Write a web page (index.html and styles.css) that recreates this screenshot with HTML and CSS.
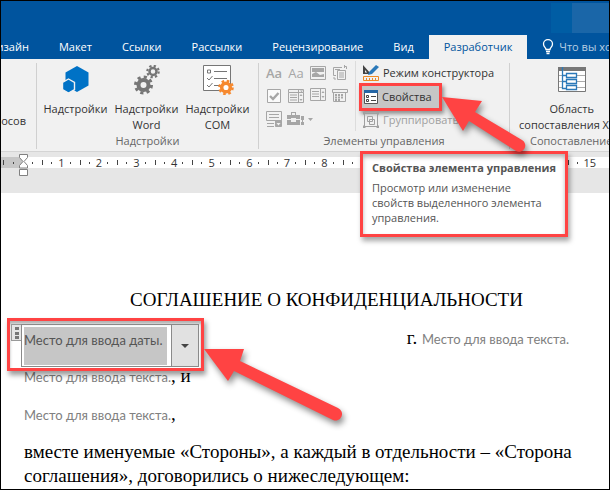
FILE: index.html
```
<!DOCTYPE html>
<html lang="ru">
  <head>
    <meta charset="utf-8">
    <title>Соглашение о конфиденциальности</title>
    <link rel="stylesheet" href="styles.css">
  </head>
  <body>
  <div class="window">
    <header class="titlebar">
      <div class="account"><span></span></div>
      <nav class="tabs">
        <button class="tab first">Дизайн</button>
        <button class="tab">Макет</button>
        <button class="tab">Ссылки</button>
        <button class="tab">Рассылки</button>
        <button class="tab">Рецензирование</button>
        <button class="tab">Вид</button>
        <button class="tab active">Разработчик</button>
        <button class="tab tell">
          <svg width="12" height="16" viewBox="0 0 12 16" fill="none" stroke="#fff" stroke-width="1.3"><path d="M4 10.500C4 8.500 1.500 8 1.500 5a4.500 4.300 0 0 1 9 0C10.500 8 8 8.500 8 10.500zM4 12.500h4M4.500 14.500h3"/></svg>
          Что вы хотите
        </button>
      </nav>
    </header>

    <section class="ribbon">
      <div class="group macros">
        <button class="big">запросов</button>
      </div>
      <div class="group addins">
        <div class="tools">
          <button class="big">
            <svg width="28" height="30" viewBox="0 0 28 30"><path fill="#0072c6" d="M15 1l11.500 6.500v13L15 27 3.500 20.500v-13z"/><path fill="#0072c6" stroke="#f1f1f1" stroke-width="1.400" d="M6.500 14l6 3.500v7l-6 3.500-6-3.500v-7z"/></svg>
            Надстройки
          </button>
          <button class="big">
            <svg width="28" height="30" viewBox="0 0 28 30" fill="none" stroke="#767676">
              <circle cx="10.500" cy="20" r="5" stroke-width="4"/><circle cx="10.500" cy="20" r="8" stroke-width="3" stroke-dasharray="3.140 3.140"/>
              <circle cx="20" cy="6.500" r="3.500" stroke-width="2.500"/><circle cx="20" cy="6.500" r="5.700" stroke-width="2.200" stroke-dasharray="2.240 2.240"/>
            </svg>
            Надстройки<br>Word
          </button>
          <button class="big">
            <svg width="32" height="30" viewBox="0 0 32 30" fill="none" stroke="#767676">
              <path fill="#fff" d="M1.500.5h27v25h-27z"/><path d="M5.500 5h3v3h-3zM12 6.500h13M12 13.500h13M12 20.500h5M5 13l2 2 3.500-4M5 20l2 2 3.500-4"/>
              <g stroke="#f6892f"><circle cx="24" cy="22.500" r="4.300" stroke-width="3.500" fill="#fff"/><circle cx="24" cy="22.500" r="6.500" stroke-width="2.600" stroke-dasharray="2.550 2.550"/></g>
            </svg>
            Надстройки<br>COM
          </button>
        </div>
        <div class="caption">Надстройки</div>
      </div>
      <div class="group controls">
        <div class="tools">
          <div class="gallery">
            <button class="aa bold" aria-label="Форматированный текст">Aa</button>
            <button class="aa" aria-label="Обычный текст">Aa</button>
            <button aria-label="Рисунок"><svg width="16" height="16" viewBox="0 0 16 16"><path fill="none" stroke="#a6a6a6" d="M.5 1.500h15v13H.5z"/><path fill="#a6a6a6" d="M2 3h12v4H2zM2 12V9l4-2 4 3 4-1v3z"/></svg></button>
            <button aria-label="Коллекция"><svg width="16" height="16" viewBox="0 0 16 16" fill="none" stroke="#a6a6a6"><path d="M10 2.500H1.500v8H4M5.500 5.500h8v9h-8zM7 8h5M7 10h5M7 12h5M3 4.500h5M12 1.500h2.500V4M12.500 0v3M2 12v2h2"/></svg></button>
            <button aria-label="Флажок"><svg width="16" height="16" viewBox="0 0 16 16" fill="none" stroke="#a6a6a6"><path fill="#fafafa" d="M1.500 1.500h13v13h-13z"/><path stroke-width="2.400" d="M4 8l3 3 5.500-6"/></svg></button>
            <button aria-label="Поле со списком"><svg width="16" height="16" viewBox="0 0 16 16" fill="none" stroke="#a6a6a6"><path d="M.5 1.500h15v3H.5zM.5 4.500v10h15v-10M10.500 2v12M2 7h7M2 9.500h7M2 12h7"/><path fill="#a6a6a6" stroke="none" d="M11.500 8L13 6l1.500 2zM11.500 11h3L13 13zM12 2.500h3L13.500 4z"/></svg></button>
            <button aria-label="Раскрывающийся список"><svg width="16" height="16" viewBox="0 0 16 16" fill="none" stroke="#a6a6a6"><path d="M.5.5h15v12H.5zM10.500 1v11M2 3.500h7M2 6h7M2 8.500h7"/><path fill="#a6a6a6" stroke="none" d="M11.500 5l1.500-2 1.500 2zM11.500 8h3L13 10z"/></svg></button>
            <button aria-label="Выбор даты"><svg width="16" height="16" viewBox="0 0 16 16" fill="none" stroke="#a6a6a6"><path d="M.5 1.500h15v3H.5zM1.500 4.500v9h12v-9"/><path stroke-width="2" stroke-dasharray="2 1" d="M3 7h9M3 9.500h9M3 12h6"/></svg></button>
            <button aria-label="Повторяющийся раздел"><svg width="16" height="16" viewBox="0 0 16 16" fill="none" stroke="#a6a6a6"><path d="M.5.5h15v9H.5zM3 3.500h10M3 6.500h10M1 12.500h7M1 15.500h7"/><path fill="#a6a6a6" d="M9.500 9.500h6v6h-6z"/><path fill="#f1f1f1" stroke="none" d="M10.500 12h4l-2 2.500z"/></svg></button>
            <button class="legacy" aria-label="Инструменты из предыдущих версий"><svg width="26" height="16" viewBox="0 0 26 16"><path fill="#a6a6a6" fill-rule="evenodd" d="M0 4h4V1h5v3h4v4H9V7H4v1H0zM5 4h3V2H5zM0 9h4v2h5V9h4v5H0zM14 5h3v4h-1v2h1v3h-3v-3h1V9h-1zM21 7h5l-2.500 3z"/></svg></button>
          </div>
          <div class="commands">
            <button class="command">
              <svg width="16" height="16" viewBox="0 0 16 16"><path fill="#444" fill-rule="evenodd" d="M0 0l8 9H0zM2 5v2.500h2.200z"/><path fill="#2b79b9" d="M13 0l3 2-7 7-4 1 1-3z"/><path fill="none" stroke="#f08a24" d="M.5 11.500h15v4H.5zM3.500 13v2M6.500 13v2M9.500 13v2M12.500 13v2"/></svg>
              Режим конструктора
            </button>
            <button class="command pressed">
              <svg width="14" height="16" viewBox="0 0 14 16"><path fill="#fff" stroke="#555" d="M.5 1.500h13v13H.5z"/><path fill="#2566a5" d="M0 1h14v3H0z"/><path fill="none" stroke="#444" d="M2.500 6.500h2v2h-2zM2.500 10.500h2v2h-2zM7 7.500h5M7 11.500h5"/></svg>
              Свойства
            </button>
            <button class="command" disabled>
              <svg width="16" height="16" viewBox="0 0 16 16" fill="none" stroke="#a0a0a0"><path d="M1.500 1.500h13v13h-13zM4.500 4.500h5v5h-5zM6.500 7.500h5v5h-5z"/><path fill="#a0a0a0" d="M0 0h2v2H0zM14 0h2v2h-2zM0 14h2v2H0zM14 14h2v2h-2z"/></svg>
              Группировать
            </button>
          </div>
        </div>
        <div class="caption">Элементы управления</div>
      </div>
      <div class="group mapping">
        <div class="tools">
          <button class="big">
            <svg width="28" height="30" viewBox="0 0 28 30" fill="none"><path fill="#fff" stroke="#777" d="M.5 2.500h27v24H.5z"/><path fill="#777" d="M0 2h28v4H0z"/><path stroke="#aaa" d="M1 10.500h26M1 16.500h26M1 22.500h26"/><path stroke="#2b79b9" stroke-width="1.300" fill="#fff" d="M4.500 2v21.500h4M4.500 10.500h4M4.500 16.500h4M8.500 8.500h10v4h-10zM8.500 14.500h10v4h-10zM8.500 20.500h10v4h-10z"/></svg>
            Область<br>сопоставления XML
          </button>
        </div>
        <div class="caption">Сопоставление</div>
      </div>
    </section>

    <div class="ruler">
      <ol class="scale">
        <li>1</li><li>2</li><li>3</li><li>4</li><li>5</li>
        <li>6</li><li>7</li><li>8</li><li></li><li></li>
        <li></li><li></li><li></li><li></li><li>15</li>
      </ol>
      <svg class="indent" width="9" height="22" viewBox="0 0 9 22" fill="#fff" stroke="#808080"><path d="M.5.500h8v3L5 7.500l3.500 4v2.500h-8v-2.500L4 7.500.5 3.500zM.5 15.500h8v6h-8z"/></svg>
    </div>

    <main class="page">
      <h1>СОГЛАШЕНИЕ О КОНФИДЕНЦИАЛЬНОСТИ</h1>
      <div class="line city">
        <div class="date">
          <span class="grip"></span>
          <label class="field"><input type="text" value="Место для ввода даты." aria-label="Дата" readonly></label>
          <button class="drop" aria-label="Выбрать дату"></button>
        </div>
        <p>г. <span class="hint">Место для ввода текста.</span></p>
      </div>
      <p class="line"><span class="hint">Место для ввода текста.</span>, и</p>
      <p class="line"><span class="hint">Место для ввода текста.</span>,</p>
      <p class="line">вместе именуемые «Стороны», а каждый в отдельности – «Сторона соглашения», договорились о нижеследующем:</p>
    </main>

    <div class="tooltip" role="tooltip">
      <strong>Свойства элемента управления</strong>
      <p>Просмотр или изменение свойств выделенного элемента управления.</p>
    </div>

    <svg class="arrows" width="610" height="490" viewBox="0 0 610 490" fill="#ff4343">
      <path d="M442 97l40 4-7 11 47 28a6 6 0 0 1-6 11l-47-30-6 10z"/>
      <path d="M204 349l40 0-4 12 98 47a6 6 0 0 1-5 12l-99-49-6 10z"/>
    </svg>
  </div>
  </body>
</html>
```
FILE: styles.css
```
* {
  box-sizing: border-box;
}
body {
  margin: 0;
  font: 11px/16px "Open Sans", "Noto Sans", sans-serif;
  color: #333;
}
p, h1, ol {
  margin: 0;
  padding: 0;
}
button, input {
  font: inherit;
  color: inherit;
  background: none;
  border: 0;
  padding: 0;
}
svg {
  flex: none;
}
.window {
  position: relative;
  min-height: 100vh;
  border: 1px solid #000;
  background: #fff;
  overflow: hidden;
}

/* title bar and tabs */
.titlebar {
  background: #00549e;
}
.account {
  display: flex;
  justify-content: flex-end;
  height: 34px;
  padding-top: 2px;
}
.account span {
  width: 58px;
  height: 30px;
  background: linear-gradient(90deg, #005da4 21px, #1a66a8 21px);
}
.tabs {
  display: flex;
  height: 24px;
}
.tab {
  flex: none;
  padding: 0 15px;
  color: #fff;
  white-space: nowrap;
}
.tab.first {
  margin-left: -27px;
}
.tab.active {
  background: #f1f1f1;
  color: #00549e;
}
.tab.tell {
  display: flex;
  align-items: center;
  gap: 5px;
  color: #b9cfe3;
}

/* ribbon */
.ribbon {
  display: flex;
  height: 93px;
  padding-top: 4px;
  background: #f1f1f1;
  border-bottom: 1px solid #d4d4d4;
}
.group {
  display: flex;
  flex: none;
  flex-direction: column;
  justify-content: space-between;
  height: 86px;
  border-right: 1px solid #d0d0d0;
}
.tools {
  display: flex;
}
.caption {
  color: #666;
  text-align: center;
  white-space: nowrap;
}
.big {
  display: flex;
  flex-direction: column;
  align-items: center;
  gap: 6px;
  white-space: nowrap;
}
.macros {
  width: 36px;
  align-items: flex-end;
  justify-content: center;
  padding: 30px 10px 0 0;
}
.addins {
  width: 222px;
}
.addins .tools {
  justify-content: center;
  padding: 2px 4px 0 2px;
}
.addins .big {
  width: 71px;
}
.controls {
  width: 251px;
}
.controls .tools {
  margin-top: -2px;
  padding-left: 4px;
}
.gallery {
  display: grid;
  grid-template-columns: repeat(4, 22px);
  grid-auto-rows: 23px;
  width: 93px;
  border-right: 1px solid #dcdcdc;
}
.gallery button {
  display: flex;
  align-items: center;
  justify-content: center;
}
.gallery .legacy {
  width: 30px;
}
.aa {
  color: #a6a6a6;
  font-size: 13px;
}
.aa.bold {
  font-weight: 600;
}
.commands {
  display: flex;
  flex-direction: column;
}
.command {
  display: flex;
  align-items: center;
  gap: 4px;
  height: 23px;
  padding-left: 7px;
  white-space: nowrap;
}
.command:disabled {
  color: #a0a0a0;
}
.command.pressed {
  height: 28px;
  margin: -1px 0 -3px 3px;
  padding: 0 7px 0 2px;
  background: #c6c6c6;
  border: 3px solid #ff4343;
  box-shadow: 2px 3px 4px rgba(0, 0, 0, 0.4);
  align-self: flex-start;
}
.mapping {
  flex: 1;
  border: 0;
}
.mapping .tools {
  padding: 2px 0 0 9px;
}
.mapping .caption {
  padding-left: 20px;
  text-align: left;
}

/* ruler */
.ruler {
  position: relative;
  height: 41px;
  padding: 5px 0 0 23px;
  background: #e6e6e6;
}
.ruler::before {
  content: "";
  position: absolute;
  left: 0;
  top: 5px;
  width: 23px;
  height: 11px;
  background:
    linear-gradient(#444, #444) 2px 3px / 1px 5px no-repeat,
    linear-gradient(#444, #444) 12px 5px / 1px 2px no-repeat,
    #c6c6c6;
}
.scale {
  display: grid;
  grid-template-columns: repeat(15, 1fr);
  height: 11px;
  padding: 0 13px 0 4px;
  background: #fff;
  list-style: none;
  line-height: 11px;
}
.scale li {
  display: flex;
  justify-content: center;
  padding-left: 29px;
  background:
    linear-gradient(#444, #444) 4px 5px / 1px 2px no-repeat,
    linear-gradient(#444, #444) 14px 3px / 1px 5px no-repeat,
    linear-gradient(#444, #444) 23px 5px / 1px 2px no-repeat;
}
.indent {
  position: absolute;
  left: 18px;
  top: 2px;
}

/* document */
.page {
  padding: 95px 40px 0 23px;
  font: 19px/24px "Liberation Serif", serif;
  color: #000;
}
.page h1 {
  padding-left: 60px;
  font: inherit;
  text-align: center;
  white-space: nowrap;
}
.line {
  margin-top: 14px;
}
.line:last-child {
  margin-right: -20px;
}
.city {
  position: relative;
  display: flex;
  justify-content: flex-end;
}
.hint {
  font: 13px/20px Lato, "Open Sans", sans-serif;
  color: #808080;
}
.date {
  position: absolute;
  left: -17px;
  top: -8px;
  display: flex;
  align-items: flex-start;
  width: 197px;
  height: 53px;
  padding: 3px 2px 2px 1px;
  border: 3px solid #ff4343;
  background: #fff;
  box-shadow: 2px 4px 5px rgba(0, 0, 0, 0.4), inset 0 3px 3px rgba(0, 0, 0, 0.3);
}
.grip {
  width: 10px;
  height: 17px;
  border: 1px solid #999;
  border-right: 0;
  background:
    linear-gradient(#777, #777) 3px 2px / 4px 3px no-repeat,
    linear-gradient(#777, #777) 3px 7px / 4px 3px no-repeat,
    linear-gradient(#777, #777) 3px 11px / 4px 3px no-repeat,
    #e6e6e6;
}
.field {
  flex: 1;
  height: 43px;
  padding: 2px 4px 2px 2px;
  border: 1px solid #8a8a8a;
}
.field input {
  display: block;
  width: 100%;
  height: 38px;
  padding: 0 0 12px;
  background: #c6c6c6;
  font: 13px/20px Lato, "Open Sans", sans-serif;
  color: #555;
}
.drop {
  display: flex;
  align-items: center;
  justify-content: center;
  width: 27px;
  height: 43px;
  border: 1px solid #8a8a8a;
  border-left: 0;
  background: #e1e1e1;
}
.drop::before {
  content: "";
  border: 4px solid transparent;
  border-top-color: #444;
  border-bottom: 0;
}

/* callouts */
.tooltip {
  position: absolute;
  left: 359px;
  top: 150px;
  width: 208px;
  padding: 6px 6px 9px 9px;
  border: 3px solid #ff4343;
  background: #fff;
  box-shadow: 2px 4px 5px rgba(0, 0, 0, 0.35), inset 0 3px 4px rgba(0, 0, 0, 0.3);
  line-height: 15px;
  color: #555;
}
.tooltip strong {
  white-space: nowrap;
}
.tooltip p {
  margin-top: 5px;
  padding-right: 8px;
}
.arrows {
  position: absolute;
  left: -1px;
  top: -1px;
  filter: drop-shadow(2px 4px 3px rgba(0, 0, 0, 0.45));
  pointer-events: none;
}
```
